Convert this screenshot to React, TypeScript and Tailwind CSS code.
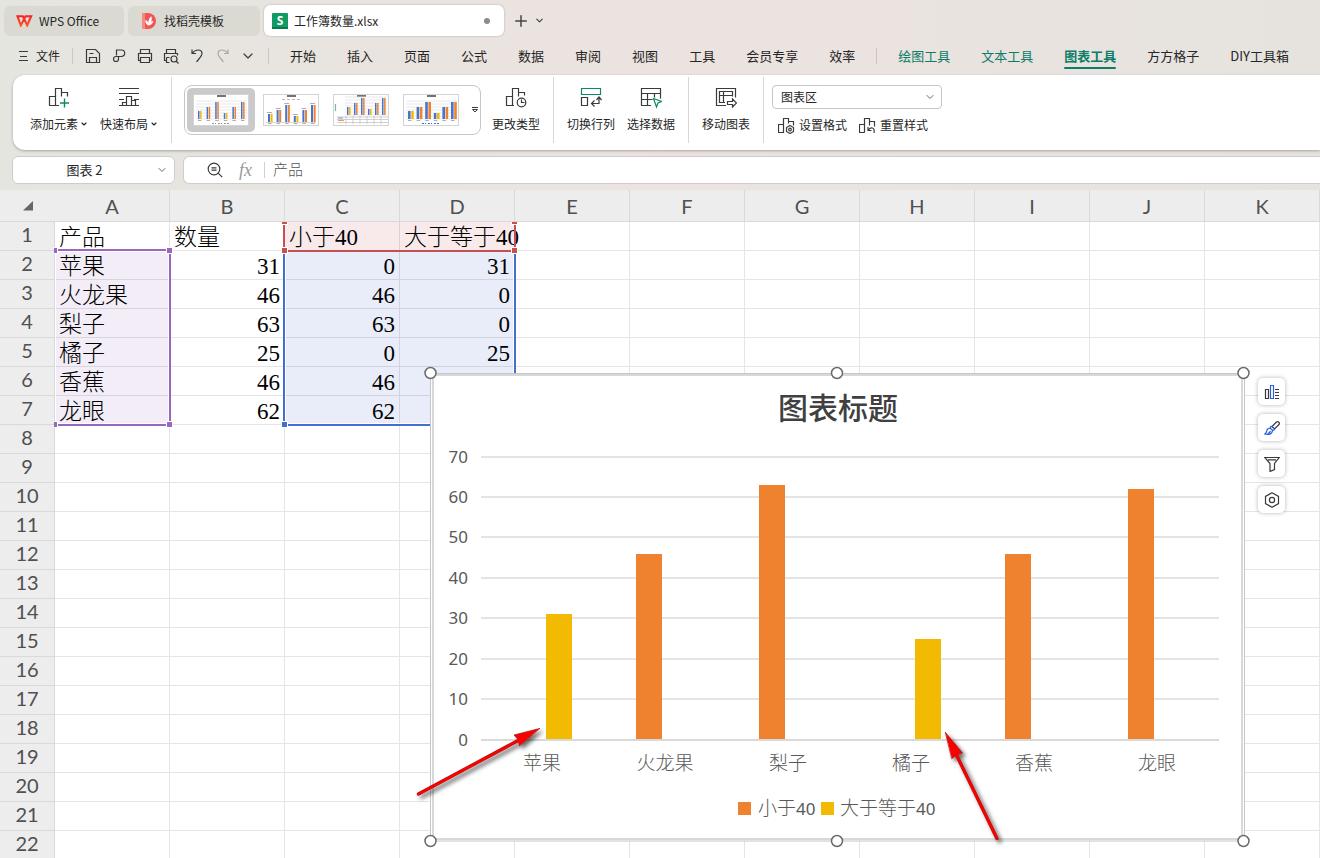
import type { ReactNode } from 'react'
import { ChevronDown, Plus } from 'lucide-react'

const COLUMNS = ['A', 'B', 'C', 'D', 'E', 'F', 'G', 'H', 'I', 'J', 'K']
const ROW_COUNT = 22

const CELLS: (string | number)[][] = [
    ['产品', '数量', '小于40', '大于等于40'],
    ['苹果', 31, 0, 31],
    ['火龙果', 46, 46, 0],
    ['梨子', 63, 63, 0],
    ['橘子', 25, 0, 25],
    ['香蕉', 46, 46, 0],
    ['龙眼', 62, 62, 0],
]

const MENUS = ['开始', '插入', '页面', '公式', '数据', '审阅', '视图', '工具', '会员专享', '效率']

function Line({ children, size = 18, className = '' }: { children: ReactNode; size?: number; className?: string }) {
    return (
        <svg
            width={size}
            height={size}
            viewBox={`0 0 ${size} ${size}`}
            fill="none"
            stroke="#3a3a3a"
            strokeWidth={1.2}
            className={`shrink-0 ${className}`}
            aria-hidden="true"
        >
            {children}
        </svg>
    )
}

function TabBar() {
    return (
        <div className="flex h-[37px] items-center gap-1 pl-1 pt-1 text-xs">
            <button className="flex h-[30px] w-[120px] items-center gap-1.5 rounded-md bg-[#dadad3] pl-3">
                <svg width="17" height="12" viewBox="0 0 17 12" fill="none" stroke="url(#wps)" strokeWidth="2">
                    <defs>
                        <linearGradient id="wps" x1="0" y1="0" x2="0" y2="1">
                            <stop offset="0" stopColor="#f5222d" />
                            <stop offset="1" stopColor="#fa541c" />
                        </linearGradient>
                    </defs>
                    <path d="M8.500 4.500 6.800 1.200H1.400l3.400 9.300L8.200 3.800l3 6.700 4-9.300H9.600L8.200 4.200" />
                </svg>
                WPS Office
            </button>
            <button className="flex h-[30px] w-[132px] items-center gap-2 rounded-md bg-[#dadad3] pl-3.5">
                <svg width="14" height="16" viewBox="0 0 14 16">
                    <path d="M0 0h6a8 8 0 0 1 0 16H0z" fill="#f25555" />
                    <path d="M0 0h3v16H0z" fill="#f58a80" />
                    <path d="M6.300 12.500C3.600 11 3.200 8.600 3.400 7c1.700.6 2.600 1.500 2.900 3 .1-2.600 1-5.500 3-6.800.8 2.500.6 4-.4 5.500.8-.6 1.600-.8 2.400-.8-.4 2.300-2 4.200-5 4.600z" fill="#fff" />
                </svg>
                <span>找稻壳模板</span>
            </button>
            <div className="flex h-[31px] w-[240px] items-center gap-1.5 rounded-md bg-white pl-2 pr-3.5 shadow-[0_0_2px_rgba(0,0,0,0.3)]">
                <svg width="16" height="16" viewBox="0 0 16 16">
                    <rect width="16" height="16" rx="1" fill="#119a63" />
                    <path d="M0 14h16v1.500a.5.5 0 0 1-.5.5H.5a.5.5 0 0 1-.5-.5z" fill="#0b7a4c" />
                    <text x="8" y="12" textAnchor="middle" fontSize="12" fontWeight="700" fill="#fff" fontFamily="Open Sans, sans-serif">S</text>
                </svg>
                <span className="flex-1">工作簿数量.xlsx</span>
                <span className="size-1.5 rounded-full bg-[#8c8c8c]" />
            </div>
            <button aria-label="新建" className="ml-0.5 p-0.5 text-[#444]">
                <Plus size={18} strokeWidth={2} />
            </button>
            <button aria-label="标签列表" className="-ml-0.5 text-[#444]">
                <ChevronDown size={11} strokeWidth={2.6} />
            </button>
        </div>
    )
}

function QuickAccess() {
    return (
        <div className="flex items-center gap-2">
            <button aria-label="保存">
                <Line>
                    <path d="M2.500 2.500h9l4 4v9h-13zM5.500 15.500v-5h7v5M5.500 6.500h4" />
                </Line>
            </button>
            <button aria-label="输出为PDF">
                <Line>
                    <path d="M6.500 8.500V3h5a3.200 3.200 0 0 1 0 6.500H6a2.500 2.500 0 1 0 2.500 2.500v-2.500" />
                </Line>
            </button>
            <button aria-label="打印">
                <Line>
                    <path d="M4.500 6.500v-4h9v4M4.500 13.500h-2v-7h13v7h-2M4.500 10.500h9v5h-9z" />
                </Line>
            </button>
            <button aria-label="打印预览">
                <Line>
                    <path d="M4.500 6.500v-4h9v4M4.500 13.500h-2v-7h13v2M4.500 10.500h3M4.500 10.500v5h3" />
                    <circle cx="12" cy="12" r="3" />
                    <path d="m14 14 2.500 2.500" />
                </Line>
            </button>
            <button aria-label="撤销">
                <Line>
                    <path d="M4 2.500v4h4M4 6.500c2-2.500 4-3.500 6-3.500 2.500 0 4 1.500 4 3.500 0 2.500-2.500 4.500-5.500 8.500" />
                </Line>
            </button>
            <button aria-label="恢复">
                <Line className="opacity-35">
                    <path d="M14 2.500v4h-4M14 6.500C12 4 10 3 8 3 5.500 3 4 4.500 4 6.500 4 9 6.500 11 9.500 15" />
                </Line>
            </button>
            <button aria-label="更多" className="text-[#3a3a3a]">
                <ChevronDown size={16} strokeWidth={1.8} />
            </button>
        </div>
    )
}

function MenuBar() {
    return (
        <nav className="flex h-[38px] items-center whitespace-nowrap pb-px text-[13px]">
            <button className="flex items-center gap-2 pl-[19px] text-xs">
                <svg width="9" height="12" viewBox="0 0 9 12" stroke="#3a3a3a">
                    <path d="M0 1.500h9M1 6.500h7M0 10.500h9" />
                </svg>
                文件
            </button>
            <span className="ml-3 mr-[11px] h-4 w-px bg-[#c9c8c4]" />
            <QuickAccess />
            <span className="ml-3 mr-[21px] h-4 w-px bg-[#c9c8c4]" />
            <div className="flex items-center gap-[31px]">
                {MENUS.map((m) => (
                    <button key={m}>{m}</button>
                ))}
            </div>
            <span className="mx-[21px] h-4 w-px bg-[#cbc4c2]" />
            <div className="flex items-center gap-[31px]">
                <button className="text-[#0b7d69]">绘图工具</button>
                <button className="text-[#0b7d69]">文本工具</button>
                <button className="relative font-bold text-[#0b7d69]">
                    图表工具
                    <span className="absolute inset-x-0 -bottom-1 h-0.5 rounded bg-[#0b7d69]" />
                </button>
                <button>方方格子</button>
                <button>DIY工具箱</button>
            </div>
        </nav>
    )
}

function RibbonButton({ label, caret, children }: { label: string; caret?: boolean; children: ReactNode }) {
    return (
        <button className="flex flex-col items-center gap-1.5">
            <Line size={22}>{children}</Line>
            <span className="flex items-center gap-0.5 leading-[18px]">
                {label}
                {caret && <ChevronDown size={8} strokeWidth={3.5} />}
            </span>
        </button>
    )
}

// Little preview of a chart style: pairs of bars over grid lines
const THUMB_BARS = [
    { value: 8, under: false },
    { value: 12, under: true },
    { value: 17, under: true },
    { value: 6, under: false },
    { value: 12, under: true },
    { value: 17, under: true },
]

function StyleThumb({ variant }: { variant: 'lines' | 'plain' | 'table' | 'wide' }) {
    const left = variant === 'table' ? 13 : 4
    const step = variant === 'table' ? 7 : 8.6
    const base = variant === 'table' ? 21 : variant === 'plain' ? 28 : 25
    const bar = variant === 'wide' ? 2.6 : variant === 'plain' ? 2 : 1.5
    return (
        <svg width="56" height="32" viewBox="0 0 56 32">
            <rect x="0.5" y="0.5" width="55" height="31" fill="#fff" stroke="#d4d4d4" />
            <path d="M24 2h9" stroke="#444" strokeWidth="1.500" />
            {variant !== 'plain' &&
                [0, 3, 6, 9, 12, 15, 18].map((y) => (
                    <path key={y} d={`M${left - 1} ${base - y}H54`} stroke="#e2e2e2" strokeWidth="0.8" />
                ))}
            {THUMB_BARS.map(({ value, under }, i) => (
                <g key={i}>
                    <rect x={left + 1 + i * step} y={base - value} width={bar} height={value} fill="#4874cb" />
                    <rect
                        x={left + 1.6 + bar + i * step}
                        y={base - value}
                        width={bar}
                        height={value}
                        fill={under ? '#ee822f' : '#f2ba02'}
                    />
                    {variant === 'plain' && <path d={`M${left + i * step} ${base - value - 1.5}h5`} stroke="#b9a9b4" />}
                    {variant !== 'table' && <path d={`M${left + 1 + i * step} ${base + 1.5}h3.500`} stroke="#999" strokeWidth="0.8" />}
                </g>
            ))}
            {variant === 'plain' && <path d="M3 28.500h50" stroke="#bbb" strokeWidth="0.6" />}
            {variant === 'table' && (
                <g strokeWidth="0.8">
                    <path d="M4 23h51M4 25.500h51M4 28.500h51" stroke="#c4c4c4" />
                    <path d="M13 22v8M20 22v8M27 22v8M34 22v8M41 22v8M48 22v8" stroke="#c4c4c4" />
                    <path d="M5 26.500h6" stroke="#ee822f" />
                    <path d="M5 24h5" stroke="#4874cb" />
                    <path d="M2.500 10v7" stroke="#7fb0b8" strokeWidth="1.200" />
                </g>
            )}
            {(variant === 'lines' || variant === 'wide') && (
                <path d="M19 29.500h4M25 29.500h4M31 29.500h6" stroke={variant === 'wide' ? '#4874cb' : '#999'} strokeDasharray="2 1" />
            )}
            {variant === 'plain' && <path d="M19 5.500h18" stroke="#c99" strokeWidth="0.8" strokeDasharray="3 2" />}
        </svg>
    )
}

function Divider() {
    return <span className="h-[66px] w-px shrink-0 bg-[#d6d6d6]" />
}

function Ribbon() {
    return (
        <section className="ml-[13px] flex h-[75px] shrink-0 items-center whitespace-nowrap rounded-l-xl bg-white pb-[5px] text-xs shadow-[0_1px_3px_rgba(0,0,0,0.28)]">
            <div className="flex items-center gap-3 pl-[17px] pr-[13px]">
                <RibbonButton label="添加元素" caret>
                    <path d="M7.500 18.500v-17h6v8M1.500 18.500v-9h6M1 18.500h10M13.500 5.500h6v4" />
                    <path d="M16.500 11.500v9M12 16h9" stroke="#0b8a63" strokeWidth="1.400" />
                </RibbonButton>
                <RibbonButton label="快速布局" caret>
                    <path d="M1 1.500h20M1 6.500h20M1 18.500h20M1 12.500h5M16 12.500h5M4.500 18.500v-3h4M8.500 18.500v-9h5v9M13.500 13.500h4v5" />
                </RibbonButton>
            </div>
            <Divider />
            <div className="ml-3 flex h-[50px] items-center gap-[14px] rounded-lg border border-[#c6c6c6] pl-[2px] pr-px">
                <button aria-label="样式 1" className="-mr-1.5 rounded-[5px] bg-[#cacaca] px-1.5 py-1.5">
                    <StyleThumb variant="lines" />
                </button>
                <button aria-label="样式 2">
                    <StyleThumb variant="plain" />
                </button>
                <button aria-label="样式 3">
                    <StyleThumb variant="table" />
                </button>
                <button aria-label="样式 4">
                    <StyleThumb variant="wide" />
                </button>
                <button aria-label="更多样式" className="-ml-0.5">
                    <svg width="8" height="8" viewBox="0 0 8 8" stroke="#3a3a3a" fill="none">
                        <path d="M1 1.500h6M1.500 3.500h5L4 6z" />
                    </svg>
                </button>
            </div>
            <div className="pl-[11px] pr-[13px]">
                <RibbonButton label="更改类型">
                    <path d="M7.500 18.500v-17h6v8M1.500 18.500v-9h6M1 18.500h8M13.500 5.500h6v3" />
                    <circle cx="16.500" cy="15.500" r="4.300" />
                    <path d="M16.500 12.500v3h3" />
                </RibbonButton>
            </div>
            <Divider />
            <div className="flex gap-3 px-[13px]">
                <RibbonButton label="切换行列">
                    <path d="M1.500 1.500h19v6h-19z" stroke="#0b8a63" />
                    <path d="M1.500 10.500h6v8h-6zM12 16.500h7v-6M14.500 13.500l-3 3 3 3M16.500 13l2.500-3 2.500 3" />
                </RibbonButton>
                <RibbonButton label="选择数据">
                    <path d="M11 18.500H1.500v-17h19v10M1.500 6.500h19M1.500 12.500h11M7.500 6.500v12M14.500 6.500v4" />
                    <path d="m13.500 11.500 8 3-3.500 1.500-1.500 4z" stroke="#0b8a63" />
                </RibbonButton>
            </div>
            <Divider />
            <div className="px-[13px]">
                <RibbonButton label="移动图表">
                    <path d="M11 18.500H1.500v-17h19v9M10 15.500H4.500v-11h13v5M4.500 8.500h13M8.500 4.500v11" />
                    <path d="M12.500 14.500h5v-2.500l4 4-4 4v-2.500h-5z" />
                </RibbonButton>
            </div>
            <Divider />
            <div className="flex flex-col gap-1.5 pl-2">
                <div className="relative w-[170px]">
                    <select
                        aria-label="图表元素"
                        className="block h-6 w-full appearance-none rounded-[4px] border border-[#c6c6c6] bg-white px-2 py-0 text-xs leading-[22px]"
                    >
                        <option>图表区</option>
                    </select>
                    <ChevronDown size={12} strokeWidth={2} className="pointer-events-none absolute right-1.5 top-1.5 text-[#666]" />
                </div>
                <div className="flex gap-3 pl-1.5 leading-5">
                    <button className="flex items-center gap-1">
                        <Line size={17}>
                            <path d="M5.500 9v-7.500h5v5M.5 15.500v-8h5M0 15.500h5.500v-8M10.500 4.500h5v4" />
                            <path d="m12 8.500 3.500 2v4l-3.500 2-3.500-2v-4z" />
                            <circle cx="12" cy="12.500" r="1.300" />
                        </Line>
                        设置格式
                    </button>
                    <button className="flex items-center gap-1">
                        <Line size={17}>
                            <path d="M5.500 15.500v-14h5v7M.5 15.500v-8h5M0 15.500h5.500M10.500 4.500h5v5" />
                            <path d="M9.500 13c1-2 2.500-2.500 4-2s2 2.500 1.500 5M9 10v3.500h3.500" />
                        </Line>
                        重置样式
                    </button>
                </div>
            </div>
        </section>
    )
}

function FormulaBar() {
    return (
        <div className="my-1.5 ml-3 flex h-7 shrink-0 gap-2">
            <div className="flex w-[163px] items-center rounded-md border border-[#cfcdca] bg-white pr-1.5">
                <input aria-label="名称框" defaultValue="图表 2" className="w-full min-w-0 text-center text-[13px] outline-none" />
                <button aria-label="名称列表" className="text-[#666]">
                    <ChevronDown size={12} strokeWidth={2} />
                </button>
            </div>
            <div className="flex flex-1 items-center rounded-l-md border border-r-0 border-[#cfcdca] bg-white pl-[23px]">
                <Line size={16}>
                    <circle cx="7" cy="7" r="5.800" />
                    <path d="m11.200 11.200 4 4M4.500 5.800h5M4.500 8.200h5" />
                </Line>
                <span className="ml-4 font-['Liberation_Serif',serif] text-lg italic leading-5 text-[#999]">fx</span>
                <span className="ml-3 h-4 w-px bg-[#d0d0d0]" />
                <input
                    aria-label="编辑栏"
                    defaultValue="产品"
                    className="flex-1 pb-0.5 pl-2 text-[15px] font-light text-[#555] outline-none"
                />
            </div>
        </div>
    )
}

function tint(row: number, col: number) {
    if (row === 0 && (col === 2 || col === 3)) return 'bg-[#f8eaea]'
    if (row >= 1 && row <= 6 && col === 0) return 'bg-[#f3edf7]'
    if (row >= 1 && row <= 6 && (col === 2 || col === 3)) return 'bg-[#e9edf9]'
    return 'bg-white'
}

function Grid() {
    return (
        <table className="w-full table-fixed border-separate border-spacing-0">
            <colgroup>
                <col className="w-[55px]" />
                {COLUMNS.map((c) => (
                    <col key={c} className="w-[115px]" />
                ))}
                <col />
            </colgroup>
            <thead>
                <tr className="h-8 bg-[#ededed] font-[Lato,sans-serif] text-xl text-[#505050]">
                    <th className="border-b border-[#d9d9d9] pl-[23px]">
                        <svg width="10" height="10" viewBox="0 0 10 10">
                            <path d="M10 0v9.500H0z" fill="#666" />
                        </svg>
                    </th>
                    {COLUMNS.map((c) => (
                        <th key={c} className="border-b border-r border-[#d9d9d9] p-0 font-normal leading-7">
                            {c}
                        </th>
                    ))}
                    <th className="border-b border-[#d9d9d9] p-0" />
                </tr>
            </thead>
            <tbody>
                {Array.from({ length: ROW_COUNT }, (_, r) => (
                    <tr key={r} className="h-[29px]">
                        <th className="border-b border-r border-[#d9d9d9] bg-[#ededed] p-0 pb-1 font-[Lato,sans-serif] text-xl font-normal leading-6 text-[#505050]">
                            {r + 1}
                        </th>
                        {COLUMNS.map((c, i) => {
                            const value = CELLS[r]?.[i]
                            return (
                                <td
                                    key={c}
                                    className={`whitespace-nowrap border-b border-r border-black/10 px-1 py-0 pt-1 font-['Liberation_Serif','Noto_Sans_CJK_SC',serif] text-[23px] font-light leading-6 text-black ${tint(r, i)} ${typeof value === 'number' ? 'text-right' : ''}`}
                                >
                                    {value}
                                </td>
                            )
                        })}
                        <td className="border-b border-black/10 bg-white p-0" />
                    </tr>
                ))}
            </tbody>
        </table>
    )
}

// Coloured frames round the ranges that feed the chart
function RangeFrames() {
    return (
        <>
            <div className="pointer-events-none absolute left-[55px] top-[59px] h-[177px] w-[116px] border-y-2 border-r-2 border-[#9668c0] shadow-[inset_0_0_0_1px_white]">
                <span className="absolute -left-px -top-1 h-[7px] w-1 border-y border-r border-white bg-[#9668c0]" />
                <span className="absolute -right-1 -top-1 size-[7px] border border-white bg-[#9668c0]" />
                <span className="absolute -bottom-1 -left-px h-[7px] w-1 border-y border-r border-white bg-[#9668c0]" />
                <span className="absolute -bottom-1 -right-1 size-[7px] border border-white bg-[#9668c0]" />
            </div>
            <div className="pointer-events-none absolute left-[283px] top-[60px] h-[176px] w-[233px] border-x-2 border-b-2 border-[#456fcf] shadow-[inset_0_0_0_1px_white]">
                <span className="absolute -bottom-1 -left-1 size-[7px] border border-white bg-[#456fcf]" />
            </div>
            <div className="pointer-events-none absolute left-[283px] top-[32px] h-[30px] w-[233px] border-x-2 border-b-2 border-[#c64f4f]">
                <span className="absolute -left-1 top-0 h-[3px] w-[7px] border-x border-b border-white bg-[#c64f4f]" />
                <span className="absolute -right-1 top-0 h-[3px] w-[7px] border-x border-b border-white bg-[#c64f4f]" />
                <span className="absolute -bottom-1 -left-1 size-[7px] border border-white bg-[#c64f4f]" />
                <span className="absolute -bottom-1 -right-1 size-[7px] border border-white bg-[#c64f4f]" />
            </div>
        </>
    )
}

const BARS = [
    { name: '苹果', x: 546, top: 614, center: 542, over: false },
    { name: '火龙果', x: 636, top: 554, center: 665, over: true },
    { name: '梨子', x: 759, top: 485, center: 788, over: true },
    { name: '橘子', x: 915, top: 639, center: 911, over: false },
    { name: '香蕉', x: 1005, top: 554, center: 1034, over: true },
    { name: '龙眼', x: 1128, top: 489, center: 1157, over: true },
]

const TICKS = [
    [70, 457],
    [60, 497],
    [50, 537],
    [40, 578],
    [30, 618],
    [20, 659],
    [10, 699],
    [0, 740],
]

function ChartObject() {
    return (
        <svg
            className="absolute left-[414px] top-[176px] font-['Noto_Sans','Noto_Sans_CJK_SC',sans-serif]"
            width="836"
            height="482"
            viewBox="414 366 836 482"
            role="img"
            aria-label="图表标题"
        >
            <defs>
                <filter id="arrowShadow" x="-20%" y="-20%" width="150%" height="150%">
                    <feDropShadow dx="3" dy="3" stdDeviation="2" floodColor="#000" floodOpacity="0.6" />
                </filter>
            </defs>
            <rect x="430.5" y="373.5" width="814" height="467.5" fill="#fff" stroke="#c4c6c9" />
            <rect x="433" y="375" width="809" height="464" fill="#fff" stroke="#d8d8d8" strokeWidth="2" />

            <text x="838" y="419" textAnchor="middle" fontSize="30" fontWeight="500" fill="#404040">
                图表标题
            </text>

            {TICKS.map(([value, y]) => (
                <g key={value}>
                    <path d={`M481 ${y}H1219`} stroke={value === 0 ? '#d9d9d9' : '#e4e4e4'} strokeWidth="2" />
                    <text x="468" y={y + 6} textAnchor="end" fontSize="17" fill="#595959">
                        {value}
                    </text>
                </g>
            ))}
            {BARS.map((b) => (
                <g key={b.name}>
                    <rect x={b.x} y={b.top} width="26" height={739 - b.top} fill={b.over ? '#ee822f' : '#f2ba02'} />
                    <text x={b.center} y="770" textAnchor="middle" fontSize="19" fontWeight="300" fill="#595959">
                        {b.name}
                    </text>
                </g>
            ))}

            <rect x="738" y="802" width="13" height="13" fill="#ee822f" />
            <text x="758" y="815" fontSize="19" fontWeight="300" fill="#595959">
                小于<tspan fontSize="17" fontWeight="400">40</tspan>
            </text>
            <rect x="821" y="802" width="13" height="13" fill="#f2ba02" />
            <text x="840" y="815" fontSize="19" fontWeight="300" fill="#595959">
                大于等于<tspan fontSize="17" fontWeight="400">40</tspan>
            </text>

            {[373, 841].map((y) =>
                [430.5, 837, 1243.5].map((x) => (
                    <circle key={`${x}-${y}`} cx={x} cy={y} r="5.5" fill="#fff" stroke="#6a6a6a" strokeWidth="1.5" />
                )),
            )}

            <g filter="url(#arrowShadow)" strokeLinecap="round">
                <path d="M418.500 794 520 739.500M997 838.500 956.500 755" stroke="#a81212" strokeWidth="3.4" />
                <path d="m539.500 728.500-25.500 6.500 4 4.500 1.500 6zM945.500 732.500l17 20.500-5.500 1.500-5 4z" fill="#fb0303" stroke="#a81212" strokeWidth="0.7" />
                <path d="M418.500 794 522 738.500M997 838.500 955.500 753" stroke="#fb0303" strokeWidth="2.400" />
            </g>
        </svg>
    )
}

function ChartTools() {
    const cls = 'flex size-[27px] items-center justify-center rounded-[5px] bg-white shadow-[0_0_4px_rgba(0,0,0,0.3)]'
    return (
        <div className="absolute left-[1258px] top-[188px] flex flex-col gap-[9px]">
            <button aria-label="图表元素" className={cls}>
                <Line size={16}>
                    <path d="M1.500 5.500h3v9h-3z" />
                    <path d="M6.500 1.500h3v13h-3z" stroke="#2f5fd8" />
                    <path d="M11 5.500h4M11 8.500h4M11 11.500h4M11 14.500h4" />
                </Line>
            </button>
            <button aria-label="图表样式" className={cls}>
                <Line size={16}>
                    <path d="M8 6.500 12.500 2a1.800 1.800 0 0 1 2.500 2.500L10.500 9z" />
                    <path d="M8 6.500c-1.300-.3-2 .8-1.500 2l2 1.800c1.200.2 2.200-.3 2-1.300zM6.500 8.500c-2-.8-3.500.5-3.700 2.300-.1 1.500-.8 2.500-2 3.200 3.500 1 7.500.5 7.700-3.700M3.500 13.500c1.500-.2 2.500-1.200 3-2.500" stroke="#2f5fd8" />
                </Line>
            </button>
            <button aria-label="图表筛选器" className={cls}>
                <Line size={16}>
                    <path d="M.8 1.500h14.400L10.500 7.500v6L6 15.500v-8zM4 3.800h8" />
                </Line>
            </button>
            <button aria-label="设置图表格式" className={cls}>
                <Line size={16}>
                    <path d="m8 .8 6.500 3.600v7.200L8 15.200l-6.500-3.600V4.400z" />
                    <circle cx="8" cy="8" r="2.600" />
                </Line>
            </button>
        </div>
    )
}

export default function App() {
    return (
        <div className="flex h-screen flex-col overflow-hidden bg-[#ededed] font-['Noto_Sans_CJK_SC',sans-serif] text-[#262626]">
            <header className="flex flex-col bg-linear-to-r from-[#e5e5df] via-[#ece3e0] to-[#e6e3df]">
                <TabBar />
                <MenuBar />
                <Ribbon />
                <FormulaBar />
            </header>
            <main className="relative min-h-0 flex-1 overflow-hidden">
                <Grid />
                <RangeFrames />
                <ChartObject />
                <ChartTools />
            </main>
        </div>
    )
}
